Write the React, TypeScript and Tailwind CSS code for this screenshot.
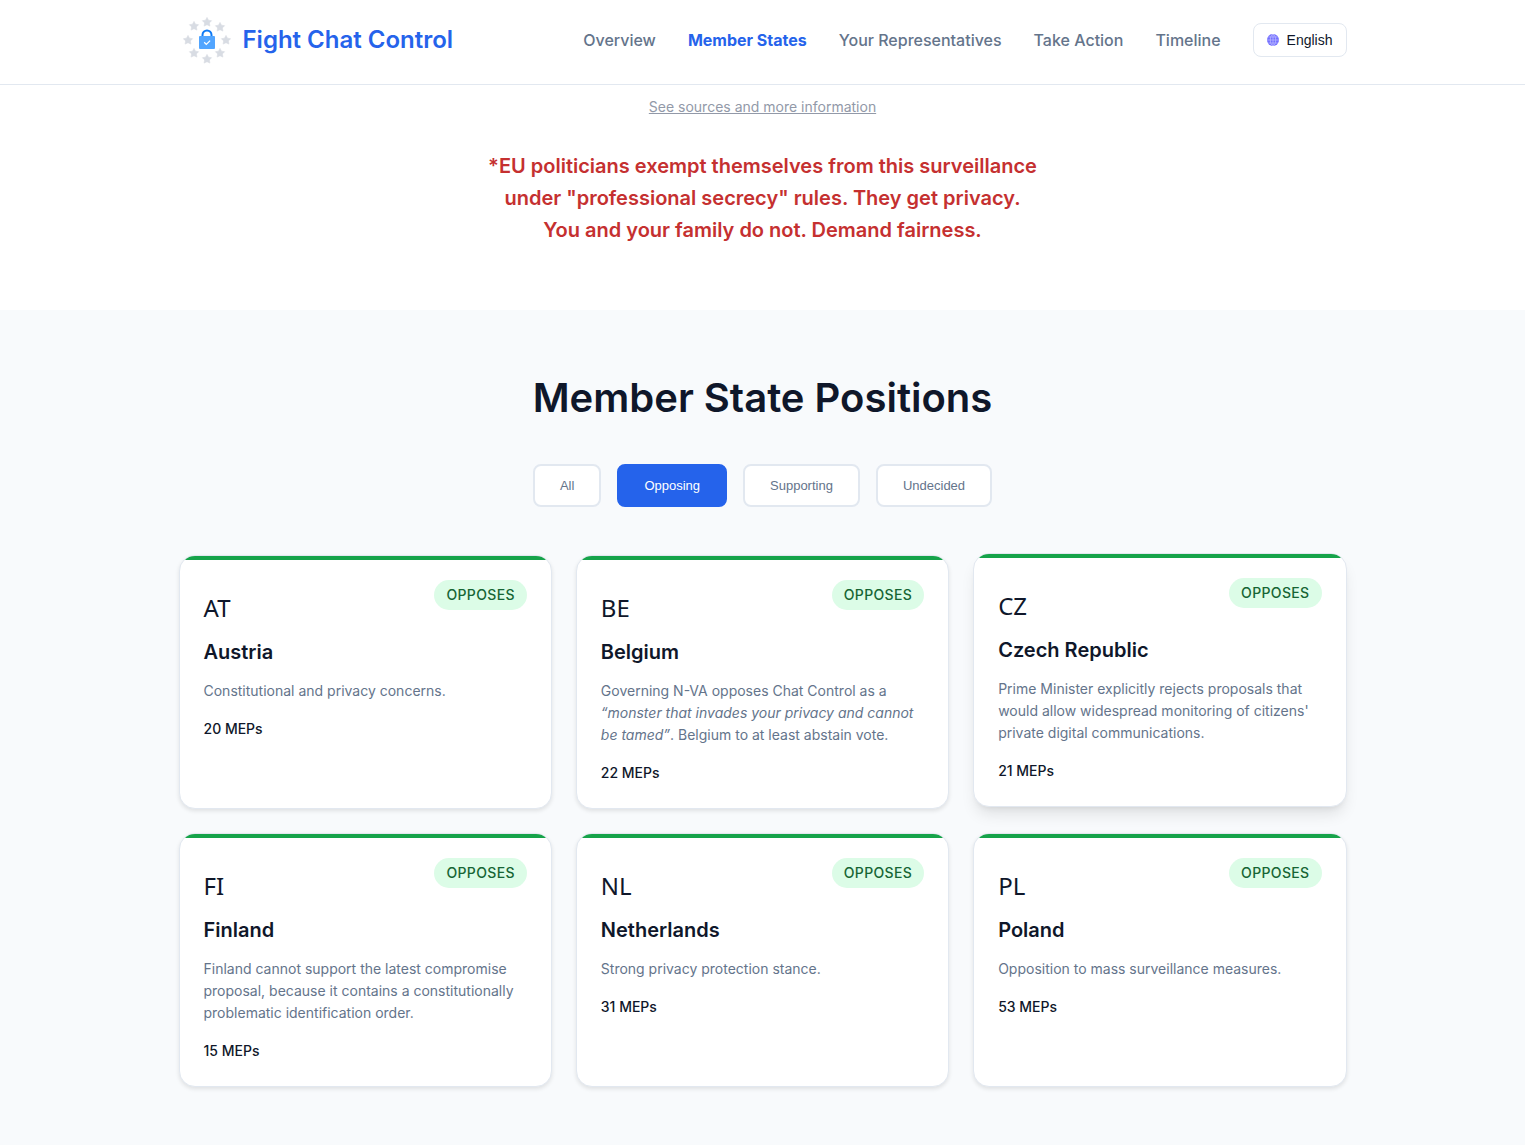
import { useState } from 'react';
import type { ReactNode } from 'react';
import clsx from 'clsx';

interface MemberState {
    code: string;
    name: string;
    description: ReactNode;
    meps: number;
    raised?: boolean;
}

const navLinks = ['Overview', 'Member States', 'Your Representatives', 'Take Action', 'Timeline'];

const filters = ['All', 'Opposing', 'Supporting', 'Undecided'];

const memberStates: MemberState[] = [
    { code: 'AT', name: 'Austria', description: 'Constitutional and privacy concerns.', meps: 20 },
    {
        code: 'BE',
        name: 'Belgium',
        description: (
            <>
                Governing N-VA opposes Chat Control as a <em>“monster that invades your privacy and cannot be tamed”</em>. Belgium to at least abstain vote.
            </>
        ),
        meps: 22,
    },
    {
        code: 'CZ',
        name: 'Czech Republic',
        description: "Prime Minister explicitly rejects proposals that would allow widespread monitoring of citizens' private digital communications.",
        meps: 21,
        raised: true,
    },
    {
        code: 'FI',
        name: 'Finland',
        description: 'Finland cannot support the latest compromise proposal, because it contains a constitutionally problematic identification order.',
        meps: 15,
    },
    { code: 'NL', name: 'Netherlands', description: 'Strong privacy protection stance.', meps: 31 },
    { code: 'PL', name: 'Poland', description: 'Opposition to mass surveillance measures.', meps: 53 },
];

// centres of the stars around the padlock
const stars = [
    [24, 6], [37, 11], [43, 24], [37, 37], [24, 43], [11, 37], [5, 24], [11, 10],
];

function Logo() {
    return (
        <svg className="size-12" viewBox="0 0 48 48" aria-hidden="true">
            {stars.map(([x, y]) => (
                <path
                    key={`${x}-${y}`}
                    transform={`translate(${x} ${y})`}
                    d="M0-4.6 1.5-1.8 4.6-1.3 2.4.9 2.9 4.1 0 2.7-2.9 4.1-2.4.9-4.6-1.3-1.5-1.8Z"
                    fill="#d8dce3"
                    stroke="#d8dce3"
                    strokeWidth="0.6"
                    strokeLinejoin="round"
                />
            ))}
            <path d="M19.5 21v-2a4.5 4.5 0 0 1 9 0v2" fill="none" stroke="#0f7af5" strokeWidth="2" />
            <rect x="16" y="20" width="16" height="13" rx="1" fill="#52a5ff" />
            <path d="m21.2 26.3 2.1 2.1 3.8-3.8" fill="none" stroke="#fff" strokeWidth="1.3" />
        </svg>
    );
}

function Globe() {
    return (
        <svg className="size-3" viewBox="0 0 12 12" aria-hidden="true">
            <circle cx="6" cy="6" r="6" fill="#7470ff" />
            <g fill="none" stroke="#c9c9ff" strokeWidth="0.6">
                <path d="M6 0v12M0 6h12M1.4 3h9.2M1.4 9h9.2" />
                <ellipse cx="6" cy="6" rx="2.7" ry="5.6" />
            </g>
        </svg>
    );
}

function Header() {
    return (
        <header className="sticky top-0 z-10 border-b border-[#e2e8f0] bg-white">
            <div className="mx-auto flex h-21 max-w-[1200px] items-center justify-between px-4 pb-1">
                <a href="#top" className="flex items-center gap-3 pl-1 text-2xl font-semibold text-[#2563eb]">
                    <Logo />
                    Fight Chat Control
                </a>
                <nav className="flex items-center gap-8">
                    {navLinks.map((link) => (
                        <a
                            key={link}
                            href={`#${link.toLowerCase().replace(/ /g, '-')}`}
                            className={clsx(link === 'Member States' ? 'font-bold text-[#2563eb]' : 'font-medium text-[#64748b]')}
                        >
                            {link}
                        </a>
                    ))}
                    <button className="flex h-[34px] items-center gap-2 rounded-lg border border-[#e2e8f0] bg-white px-[13px] font-['Liberation_Sans',sans-serif] text-sm text-[#0f172a]">
                        <Globe />
                        English
                    </button>
                </nav>
            </div>
        </header>
    );
}

function StateCard({ state }: { state: MemberState }) {
    return (
        <article
            className={clsx(
                'relative overflow-hidden rounded-2xl border border-[#e2e8f0] bg-white p-6',
                state.raised ? '-translate-y-0.5 shadow-lg' : 'shadow-[0_2px_4px_rgba(0,0,0,0.1)]'
            )}
        >
            <div className="absolute inset-x-0 top-0 h-1 bg-[#16a34a]" />
            <span className="absolute top-6 right-6 rounded-full bg-[#dcfce7] px-3 py-1 text-sm leading-[22px] font-medium tracking-wide text-[#166534]">
                OPPOSES
            </span>
            <div className="font-['Noto_Sans',sans-serif] text-2xl leading-[56px]">{state.code}</div>
            <h3 className="text-xl leading-8 font-semibold">{state.name}</h3>
            <p className="mt-3 text-sm leading-[22px] text-[#64748b]">{state.description}</p>
            <p className="mt-4 text-sm leading-[22px] font-medium">{state.meps} MEPs</p>
        </article>
    );
}

export default function App() {
    const [activeFilter, setActiveFilter] = useState<string>('Opposing');

    return (
        <div id="top" className="min-h-screen bg-[#f8fafc] font-['Inter',sans-serif] text-[#0f172a]">
            <Header />

            <section className="bg-white px-4 pt-[9px] pb-16 text-center">
                <a href="#sources" className="text-sm text-[#9299a8] underline">
                    See sources and more information
                </a>
                <p className="mx-auto mt-8 max-w-[600px] text-xl leading-8 font-semibold text-[#c53030]">
                    *EU politicians exempt themselves from this surveillance
                    <br />
                    under "professional secrecy" rules. They get privacy.
                    <br />
                    You and your family do not. Demand fairness.
                </p>
            </section>

            <section id="member-states" className="mx-auto max-w-[1200px] px-4 pt-16 pb-14">
                <h2 className="text-center text-[40px] leading-12 font-semibold">Member State Positions</h2>

                <div className="mt-[42px] flex flex-wrap justify-center gap-4">
                    {filters.map((filter) => (
                        <button
                            key={filter}
                            onClick={() => setActiveFilter(filter)}
                            className={clsx(
                                "rounded-lg border-2 px-[25px] py-3 font-['Liberation_Sans',sans-serif] text-[13px] leading-[15px] font-medium",
                                filter === activeFilter ? 'border-[#2563eb] bg-[#2563eb] text-white' : 'border-[#e2e8f0] bg-white text-[#64748b]'
                            )}
                        >
                            {filter}
                        </button>
                    ))}
                </div>

                <div className="mt-12 grid grid-cols-1 gap-6 md:grid-cols-2 lg:grid-cols-3">
                    {memberStates.map((state) => (
                        <StateCard key={state.code} state={state} />
                    ))}
                </div>
            </section>
        </div>
    );
}
